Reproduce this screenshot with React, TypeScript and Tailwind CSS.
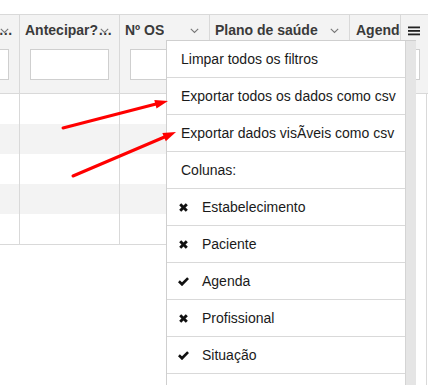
import React from "react";

type Col = { w: string; title: string; chev: boolean; first?: boolean; clip?: boolean };

const cols: Col[] = [
  { w: "w-[100px]", title: "Data de atendimento", chev: true, first: true },
  { w: "w-[100px]", title: "Antecipar? (sim/não)", chev: true },
  { w: "w-[90px]", title: "Nº OS", chev: true },
  { w: "w-[140px]", title: "Plano de saúde", chev: true },
  { w: "w-[51px]", title: "Agenda", chev: false, clip: true },
];

function Chevron() {
  return (
    <svg width="9" height="6" viewBox="0 0 9 6" className="absolute right-[10px] top-[13px]">
      <polyline points="0.8,0.8 4.5,4.5 8.2,0.8" fill="none" stroke="#777" strokeWidth="1.1" />
    </svg>
  );
}

function XIcon() {
  return (
    <svg width="9" height="9" viewBox="0 0 9 9">
      <line x1="1.2" y1="1.2" x2="7.8" y2="7.8" stroke="#111" strokeWidth="2.9" />
      <line x1="7.8" y1="1.2" x2="1.2" y2="7.8" stroke="#111" strokeWidth="2.9" />
    </svg>
  );
}

function CheckIcon() {
  return (
    <svg width="11" height="9" viewBox="0 0 11 9">
      <polyline points="0.9,4.3 4,7.3 10.1,1.1" fill="none" stroke="#111" strokeWidth="2.7" />
    </svg>
  );
}

type Item = { t: string; icon?: "x" | "check" };
const items: Item[] = [
  { t: "Limpar todos os filtros" },
  { t: "Exportar todos os dados como csv" },
  { t: "Exportar dados visÃveis como csv" },
  { t: "Colunas:" },
  { t: "Estabelecimento", icon: "x" },
  { t: "Paciente", icon: "x" },
  { t: "Agenda", icon: "check" },
  { t: "Profissional", icon: "x" },
  { t: "Situação", icon: "check" },
  { t: "Data", icon: "check" },
];

export default function App() {
  return (
    <div className="relative w-[428px] h-[385px] overflow-hidden bg-white flex flex-col pt-[14px] font-['Liberation_Sans',Arial,sans-serif]">
      {/* header */}
      <div className="flex h-[80px] shrink-0 border-t border-b border-[#d9d9d9] bg-[#f3f3f3]">
        {cols.map((c, i) => (
          <div
            key={i}
            className={`relative ${c.w} shrink-0 flex flex-col ${c.first ? "-ml-[81px]" : "border-l border-[#d9d9d9]"}`}
          >
            {c.clip ? (
              <div className="relative h-[31px] flex items-center pl-[6px] overflow-hidden">
                <span className="block whitespace-nowrap font-bold text-[14px] text-[#3a3a3a]">{c.title}</span>
              </div>
            ) : (
              <div className="relative h-[31px] flex items-center pl-[5px] pr-[6px]">
                <span className="block overflow-hidden text-ellipsis whitespace-nowrap font-bold text-[14px] text-[#3a3a3a]">
                  {c.title}
                </span>
                {c.chev && <Chevron />}
              </div>
            )}
            <div className="h-[47px] pt-[3px] pl-[10px] pr-[10px]">
              <input readOnly className="block w-full h-[31px] border border-[#cfcfcf] bg-white outline-none" />
            </div>
          </div>
        ))}
        <div className="relative w-[27px] shrink-0 flex flex-col border-l border-[#d9d9d9]">
          <div className="h-[31px] flex items-center justify-center">
            <svg width="12" height="10" viewBox="0 0 12 10">
              <rect x="0" y="0.5" width="12" height="1.8" fill="#222" />
              <rect x="0" y="4" width="12" height="1.8" fill="#222" />
              <rect x="0" y="7.5" width="12" height="1.8" fill="#222" />
            </svg>
          </div>
          <div className="h-[47px] pt-[3px] pl-[4px] pr-[7px]">
            <input readOnly className="block w-full h-[31px] border border-[#cfcfcf] bg-white outline-none" />
          </div>
        </div>
      </div>

      {/* body */}
      <div className="flex flex-1">
        <div className="-ml-[81px] w-[481px] shrink-0">
          {[0, 1, 2, 3, 4].map((r) => (
            <div
              key={r}
              className={`flex ${r % 2 === 1 ? "bg-[#f3f3f3]" : "bg-white"} ${r === 4 ? "h-[31px] border-b border-[#d9d9d9]" : "h-[30px]"}`}
            >
              {cols.map((c, i) => (
                <div key={i} className={`${c.w} shrink-0 ${c.first ? "" : "border-l border-[#d9d9d9]"}`} />
              ))}
            </div>
          ))}
        </div>
        <div className="w-[27px] shrink-0 border-r border-[#d9d9d9]" />
      </div>

      {/* column menu */}
      <div className="absolute left-[166px] top-[40px] w-[250px] h-[345px] flex border-l border-t border-[#cfcfcf] bg-white">
        <div className="w-[239px] shrink-0 border-r border-[#d4d4d4]">
          {items.map((it, i) =>
            it.icon ? (
              <div key={i} className="h-[37px] border-b border-[#d9d9d9] flex items-center pl-[11px] text-[14px] text-[#1a1a1a]">
                <span className="w-[11px] flex justify-center">
                  {it.icon === "x" ? <XIcon /> : <CheckIcon />}
                </span>
                <span className="ml-[13px]">{it.t}</span>
              </div>
            ) : (
              <div key={i} className="h-[37px] border-b border-[#d9d9d9] flex items-center pl-[14px] text-[14px] text-[#1a1a1a]">
                {it.t}
              </div>
            )
          )}
        </div>
        <div className="w-[10px] shrink-0 bg-[#e5e5e5]" />
      </div>

      {/* annotation arrows */}
      <svg className="absolute inset-0 pointer-events-none" width="428" height="385" viewBox="0 0 428 385">
        <line x1="63" y1="128" x2="156" y2="104" stroke="#ff0000" strokeWidth="3" strokeLinecap="round" />
        <polygon points="168,101 156.5,108.6 154.3,99.9" fill="#ff0000" />
        <line x1="73" y1="176" x2="164.5" y2="137" stroke="#ff0000" strokeWidth="3" strokeLinecap="round" />
        <polygon points="176,132 165.8,141.2 162.3,133.0" fill="#ff0000" />
      </svg>
    </div>
  );
}
